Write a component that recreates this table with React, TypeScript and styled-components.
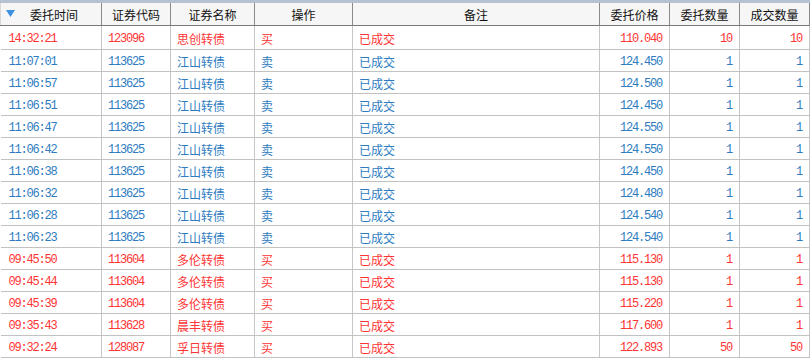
import React from 'react';
import styled, { createGlobalStyle } from 'styled-components';

type Order = {
  time: string;
  code: string;
  name: string;
  side: '买' | '卖';
  note: string;
  price: string;
  qty: string;
  filled: string;
};

const orders: Order[] = [
  { time: '14:32:21', code: '123096', name: '思创转债', side: '买', note: '已成交', price: '110.040', qty: '10', filled: '10' },
  { time: '11:07:01', code: '113625', name: '江山转债', side: '卖', note: '已成交', price: '124.450', qty: '1', filled: '1' },
  { time: '11:06:57', code: '113625', name: '江山转债', side: '卖', note: '已成交', price: '124.500', qty: '1', filled: '1' },
  { time: '11:06:51', code: '113625', name: '江山转债', side: '卖', note: '已成交', price: '124.450', qty: '1', filled: '1' },
  { time: '11:06:47', code: '113625', name: '江山转债', side: '卖', note: '已成交', price: '124.550', qty: '1', filled: '1' },
  { time: '11:06:42', code: '113625', name: '江山转债', side: '卖', note: '已成交', price: '124.550', qty: '1', filled: '1' },
  { time: '11:06:38', code: '113625', name: '江山转债', side: '卖', note: '已成交', price: '124.450', qty: '1', filled: '1' },
  { time: '11:06:32', code: '113625', name: '江山转债', side: '卖', note: '已成交', price: '124.480', qty: '1', filled: '1' },
  { time: '11:06:28', code: '113625', name: '江山转债', side: '卖', note: '已成交', price: '124.540', qty: '1', filled: '1' },
  { time: '11:06:23', code: '113625', name: '江山转债', side: '卖', note: '已成交', price: '124.540', qty: '1', filled: '1' },
  { time: '09:45:50', code: '113604', name: '多伦转债', side: '买', note: '已成交', price: '115.130', qty: '1', filled: '1' },
  { time: '09:45:44', code: '113604', name: '多伦转债', side: '买', note: '已成交', price: '115.130', qty: '1', filled: '1' },
  { time: '09:45:39', code: '113604', name: '多伦转债', side: '买', note: '已成交', price: '115.220', qty: '1', filled: '1' },
  { time: '09:35:43', code: '113628', name: '晨丰转债', side: '买', note: '已成交', price: '117.600', qty: '1', filled: '1' },
  { time: '09:32:24', code: '128087', name: '孚日转债', side: '买', note: '已成交', price: '122.893', qty: '50', filled: '50' },
];

const columns = [
  { title: '委托时间', width: 101 },
  { title: '证券代码', width: 69 },
  { title: '证券名称', width: 84 },
  { title: '操作', width: 98 },
  { title: '备注', width: 247 },
  { title: '委托价格', width: 70 },
  { title: '委托数量', width: 70 },
  { title: '成交数量', width: 70 },
];

const GlobalStyle = createGlobalStyle`
  html, body {
    margin: 0;
    padding: 0;
    background: #fff;
  }
  body {
    font-family: "Noto Sans CJK SC", "Liberation Sans", sans-serif;
    font-size: 12px;
  }
`;

const Frame = styled.div`
  width: 810px;
  border-top: 3px solid #b6c2d2;
`;

const Grid = styled.table`
  table-layout: fixed;
  border-collapse: collapse;
  width: 809px;
`;

const HeadCell = styled.th`
  padding: 0;
  background: #f6f6f6;
  border-right: 1px solid #8a8a8a;
  border-bottom: 1px solid #7a7a7a;
  font-weight: normal;
  color: #111;

  &:first-child {
    border-left: 1px solid #d8d8d8;
  }
`;

const HeadInner = styled.div<{ $sorted?: boolean }>`
  height: 22px;
  display: flex;
  align-items: center;
  justify-content: center;
  position: relative;
  padding-left: ${(p) => (p.$sorted ? '6px' : '0')};
  white-space: nowrap;
  overflow: hidden;
`;

const SortMark = styled.svg`
  position: absolute;
  left: 5px;
  top: 7px;
`;

const Row = styled.tr<{ $sell: boolean }>`
  color: ${(p) => (p.$sell ? '#2e7cbf' : '#ff3434')};
`;

const Cell = styled.td`
  padding: 0;
  border-right: 1px solid #c6c6c6;
  border-bottom: 1px solid #c2c2c2;
`;

const CellBox = styled.div<{ $right?: boolean; $first?: boolean; $top?: boolean }>`
  height: ${(p) => (p.$top ? 23 : 21)}px;
  display: flex;
  align-items: center;
  justify-content: ${(p) => (p.$right ? 'flex-end' : 'flex-start')};
  padding: ${(p) => (p.$right ? '2px 7px 0 0' : `2px 0 0 ${p.$first ? 8 : 6}px`)};
  box-sizing: border-box;
  white-space: nowrap;
  overflow: hidden;
  line-height: 1;
`;

const Num = styled.span`
  font-family: "Liberation Mono", "DejaVu Sans Mono", monospace;
  font-size: 12px;
  letter-spacing: -1.2px;
`;

export default function App() {
  return (
    <>
      <GlobalStyle />
      <Frame>
        <Grid>
          <colgroup>
            {columns.map((c) => (
              <col key={c.title} style={{ width: c.width }} />
            ))}
          </colgroup>
          <thead>
            <tr>
              {columns.map((c, i) => (
                <HeadCell key={c.title}>
                  <HeadInner $sorted={i === 0}>
                    {i === 0 && (
                      <SortMark width="9" height="7" viewBox="0 0 9 7">
                        <path d="M0 0 H9 L4.5 7 Z" fill="#3d8fe0" />
                      </SortMark>
                    )}
                    {c.title}
                  </HeadInner>
                </HeadCell>
              ))}
            </tr>
          </thead>
          <tbody>
            {orders.map((o, i) => {
              const top = i === 0;
              return (
                <Row key={i} $sell={o.side === '卖'}>
                  <Cell><CellBox $top={top} $first><Num>{o.time}</Num></CellBox></Cell>
                  <Cell><CellBox $top={top}><Num>{o.code}</Num></CellBox></Cell>
                  <Cell><CellBox $top={top}>{o.name}</CellBox></Cell>
                  <Cell><CellBox $top={top}>{o.side}</CellBox></Cell>
                  <Cell><CellBox $top={top}>{o.note}</CellBox></Cell>
                  <Cell><CellBox $top={top} $right><Num>{o.price}</Num></CellBox></Cell>
                  <Cell><CellBox $top={top} $right><Num>{o.qty}</Num></CellBox></Cell>
                  <Cell><CellBox $top={top} $right><Num>{o.filled}</Num></CellBox></Cell>
                </Row>
              );
            })}
          </tbody>
        </Grid>
      </Frame>
    </>
  );
}
